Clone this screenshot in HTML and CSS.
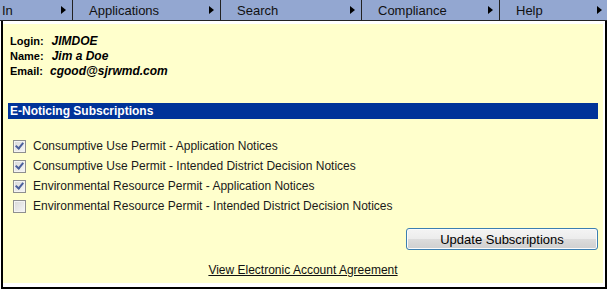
FILE: index.html
```html
<!DOCTYPE html>
<html lang="en">
<head>
    <meta charset="UTF-8">
    <meta name="viewport" content="width=device-width, initial-scale=1.0">
    <title>E-Noticing Subscriptions</title>
    <link rel="stylesheet" href="styles.css">
</head>
<body>
    <div class="menubar">
        <div class="menu-item first"><span>In</span><span class="arrow"></span></div>
        <div class="menu-item apps"><span>Applications</span><span class="arrow"></span></div>
        <div class="menu-item search"><span>Search</span><span class="arrow"></span></div>
        <div class="menu-item compliance"><span>Compliance</span><span class="arrow"></span></div>
        <div class="menu-item help"><span>Help</span><span class="arrow"></span></div>
    </div>
    <div class="frame">
        <div class="content">
            <div class="account">
                <div><span class="label">Login:</span><span class="value">JIMDOE</span></div>
                <div><span class="label">Name:</span><span class="value">Jim a Doe</span></div>
                <div><span class="label">Email:</span><span class="value email">cgood@sjrwmd.com</span></div>
            </div>

            <div class="section-title">E-Noticing Subscriptions</div>

            <form class="subscriptions">
                <label class="sub-row"><input type="checkbox" checked>Consumptive Use Permit - Application Notices</label>
                <label class="sub-row"><input type="checkbox" checked>Consumptive Use Permit - Intended District Decision Notices</label>
                <label class="sub-row"><input type="checkbox" checked>Environmental Resource Permit - Application Notices</label>
                <label class="sub-row"><input type="checkbox">Environmental Resource Permit - Intended District Decision Notices</label>
                <div class="actions">
                    <button type="submit">Update Subscriptions</button>
                </div>
            </form>

            <div class="agreement">
                <a href="#">View Electronic Account Agreement</a>
            </div>
        </div>
    </div>
</body>
</html>
```

FILE: styles.css
```css
body {
    margin: 0;
    padding: 0;
    background-color: #fff;
    font-family: "Liberation Sans", Arial, sans-serif;
    color: #000;
}

.menubar {
    display: flex;
    height: 20px;
    background-color: #93a7d1;
    border-bottom: 1px solid #222;
}

.menu-item {
    display: flex;
    align-items: center;
    justify-content: space-between;
    padding: 0 6px 0 16px;
    border-right: 1px solid #222;
    font-size: 13px;
    color: #111;
}

.menu-item.first {
    width: 64px;
    padding-left: 2px;
}

.menu-item.apps {
    width: 125px;
}

.menu-item.search {
    width: 118px;
}

.menu-item.compliance {
    width: 115px;
}

.menu-item.help {
    flex: 1;
    border-right: none;
    padding-right: 5px;
}

.arrow {
    width: 0;
    height: 0;
    border-top: 4px solid transparent;
    border-bottom: 4px solid transparent;
    border-left: 5px solid #000;
}

.frame {
    margin-left: 1px;
    padding: 3px 2px 4px 0;
    border: 2px solid #000;
    border-top: none;
    background-color: #fff;
}

.content {
    background-color: #ffffcc;
    padding: 8px 0 5px 0;
}

.account {
    padding-left: 7px;
    line-height: 15px;
}

.account div {
    height: 15px;
}

.account .label {
    font-size: 11px;
    font-weight: bold;
    margin-right: 8px;
}

.account .value {
    font-size: 12px;
    font-weight: bold;
    font-style: italic;
}

.account .email {
    margin-left: -1px;
}

.section-title {
    margin: 26px 5px 0 5px;
    height: 16px;
    line-height: 16px;
    padding-left: 2px;
    background-color: #003399;
    color: #fff;
    font-size: 12px;
    font-weight: bold;
}

.subscriptions {
    margin-top: 17px;
}

.sub-row {
    display: flex;
    align-items: center;
    height: 20px;
    padding-left: 10px;
    font-size: 12px;
    color: #1a1a1a;
}

.sub-row input {
    appearance: none;
    -webkit-appearance: none;
    position: relative;
    width: 13px;
    height: 13px;
    margin: 0 7px 0 0;
    border: 1px solid #8e8f8f;
    background: linear-gradient(135deg, #d8d8d8, #f6f6f6);
    box-shadow: inset 0 0 0 1px #f4f4f4;
}

.sub-row input:checked::after {
    content: "";
    position: absolute;
    left: 3px;
    top: 0px;
    width: 3px;
    height: 6px;
    border-right: 2px solid #4a5f9c;
    border-bottom: 2px solid #4a5f9c;
    transform: rotate(40deg);
}

.actions {
    display: flex;
    justify-content: flex-end;
    margin: 12px 5px 0 0;
}

.actions button {
    width: 192px;
    height: 22px;
    padding: 0;
    font-family: "Liberation Sans", Arial, sans-serif;
    font-size: 13px;
    color: #000;
    border: 1px solid #3c7fb1;
    border-radius: 3px;
    background: linear-gradient(#f4f4f4 0%, #ececec 50%, #dcdcdc 51%, #cfcfcf 100%);
    box-shadow: inset 0 0 0 1px #fbfbfb;
    cursor: pointer;
}

.agreement {
    margin-top: 13px;
    text-align: center;
    line-height: 15px;
    font-size: 12px;
}

.agreement a {
    color: #111;
}
```
